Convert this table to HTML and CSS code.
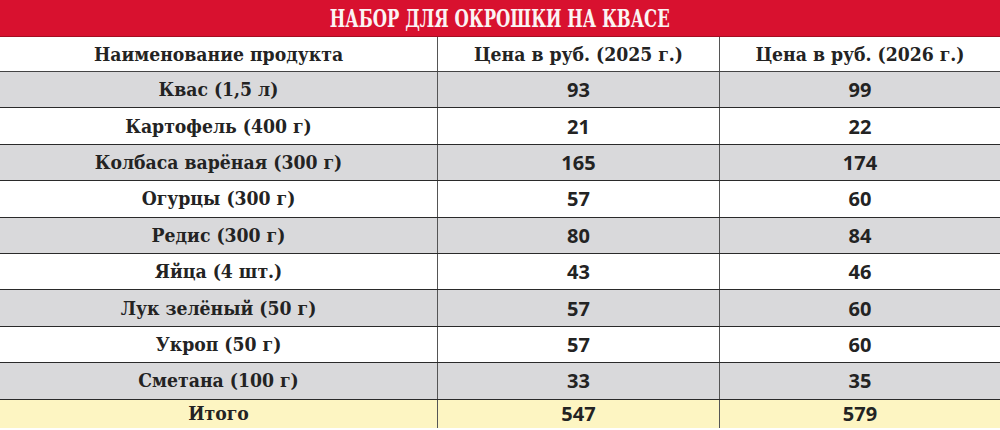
FILE: index.html
```html
<!DOCTYPE html>
<html lang="ru">
<head>
<meta charset="utf-8">
<link rel="stylesheet" href="styles.css">
</head>
<body>
<div class="sheet">
  <div class="title"><span class="title-text">НАБОР ДЛЯ ОКРОШКИ НА КВАСЕ</span></div>
  <div class="row head">
    <div class="cell">Наименование продукта</div>
    <div class="cell">Цена в руб. (2025 г.)</div>
    <div class="cell">Цена в руб. (2026 г.)</div>
  </div>
  <div class="row gray"><div class="cell">Квас (1,5 л)</div><div class="cell num">93</div><div class="cell num">99</div></div>
  <div class="row"><div class="cell">Картофель (400 г)</div><div class="cell num">21</div><div class="cell num">22</div></div>
  <div class="row gray"><div class="cell">Колбаса варёная (300 г)</div><div class="cell num">165</div><div class="cell num">174</div></div>
  <div class="row"><div class="cell">Огурцы (300 г)</div><div class="cell num">57</div><div class="cell num">60</div></div>
  <div class="row gray"><div class="cell">Редис (300 г)</div><div class="cell num">80</div><div class="cell num">84</div></div>
  <div class="row"><div class="cell">Яйца (4 шт.)</div><div class="cell num">43</div><div class="cell num">46</div></div>
  <div class="row gray"><div class="cell">Лук зелёный (50 г)</div><div class="cell num">57</div><div class="cell num">60</div></div>
  <div class="row"><div class="cell">Укроп (50 г)</div><div class="cell num">57</div><div class="cell num">60</div></div>
  <div class="row gray"><div class="cell">Сметана (100 г)</div><div class="cell num">33</div><div class="cell num">35</div></div>
  <div class="row total"><div class="cell">Итого</div><div class="cell num">547</div><div class="cell num">579</div></div>
</div>
</body>
</html>
```
FILE: styles.css
```css
html, body {
  margin: 0;
  padding: 0;
  background: #ffffff;
}
.sheet {
  width: 1000px;
  height: 430px;
  overflow: hidden;
  font-family: "DejaVu Serif Condensed", "DejaVu Serif", serif;
  font-weight: bold;
  color: #232323;
}
.title {
  height: 37px;
  background: #d8112f;
  color: #fbf3f3;
  text-align: center;
  box-shadow: inset 0 -1px 0 #a50d22;
  display: flex;
  align-items: center;
  justify-content: center;
}
.title-text {
  display: inline-block;
  font-size: 25px;
  line-height: 37px;
  transform: scaleX(0.73);
  white-space: nowrap;
}
.row {
  display: grid;
  grid-template-columns: 438px 282px 1fr;
  height: 36.4px;
  border-bottom: 1.5px solid #2a2a2a;
  box-sizing: border-box;
}
.row.head {
  height: 35px;
  border-bottom: 1.5px solid #444;
}
.cell {
  display: flex;
  align-items: center;
  justify-content: center;
  font-size: 19.2px;
  border-right: 1.5px solid #555;
}
.cell:last-child {
  border-right: none;
}
.num {
  font-family: "Open Sans", "DejaVu Sans", sans-serif;
  font-weight: 700;
  font-size: 20px;
}
.gray {
  background: #d9d9db;
}
.total {
  background: #fdf5c2;
  border-bottom: none;
  height: 28px;
}
```
